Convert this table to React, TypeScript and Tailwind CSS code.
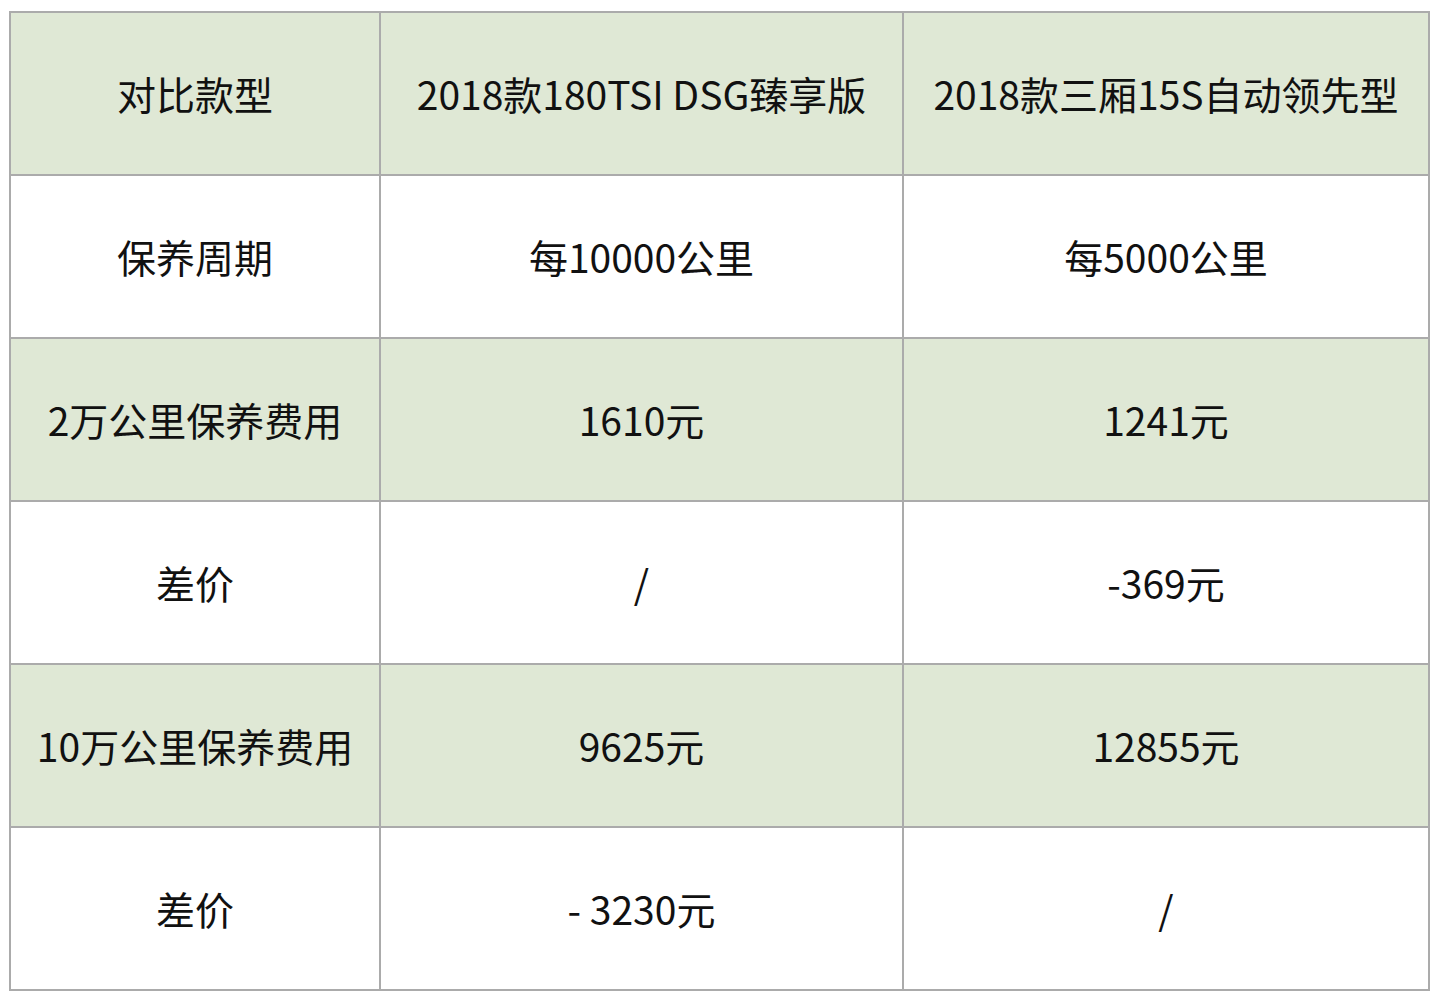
const rows: { cells: string[]; shaded: boolean }[] = [
  { cells: ["对比款型", "2018款180TSI DSG臻享版", "2018款三厢15S自动领先型"], shaded: true },
  { cells: ["保养周期", "每10000公里", "每5000公里"], shaded: false },
  { cells: ["2万公里保养费用", "1610元", "1241元"], shaded: true },
  { cells: ["差价", "/", "-369元"], shaded: false },
  { cells: ["10万公里保养费用", "9625元", "12855元"], shaded: true },
  { cells: ["差价", "- 3230元", "/"], shaded: false },
];

export default function App() {
  return (
    <div className="w-[1441px] h-[1000px] bg-white pt-[11px] pl-[9px]">
      <div
        className="grid grid-cols-[370px_523px_526px] border-t-2 border-l-2 border-[#ababab] w-[1421px]"
        style={{ fontFamily: '"Noto Sans CJK SC", "Noto Sans", sans-serif' }}
      >
        {rows.map((r, i) =>
          r.cells.map((c, j) => (
            <div
              key={`${i}-${j}`}
              className={`h-[163px] flex items-center justify-center border-r-2 border-b-2 border-[#ababab] text-[39px] text-[#111] ${
                r.shaded ? "bg-[#dfe8d5]" : "bg-white"
              }`}
            >
              {c}
            </div>
          ))
        )}
      </div>
    </div>
  );
}
